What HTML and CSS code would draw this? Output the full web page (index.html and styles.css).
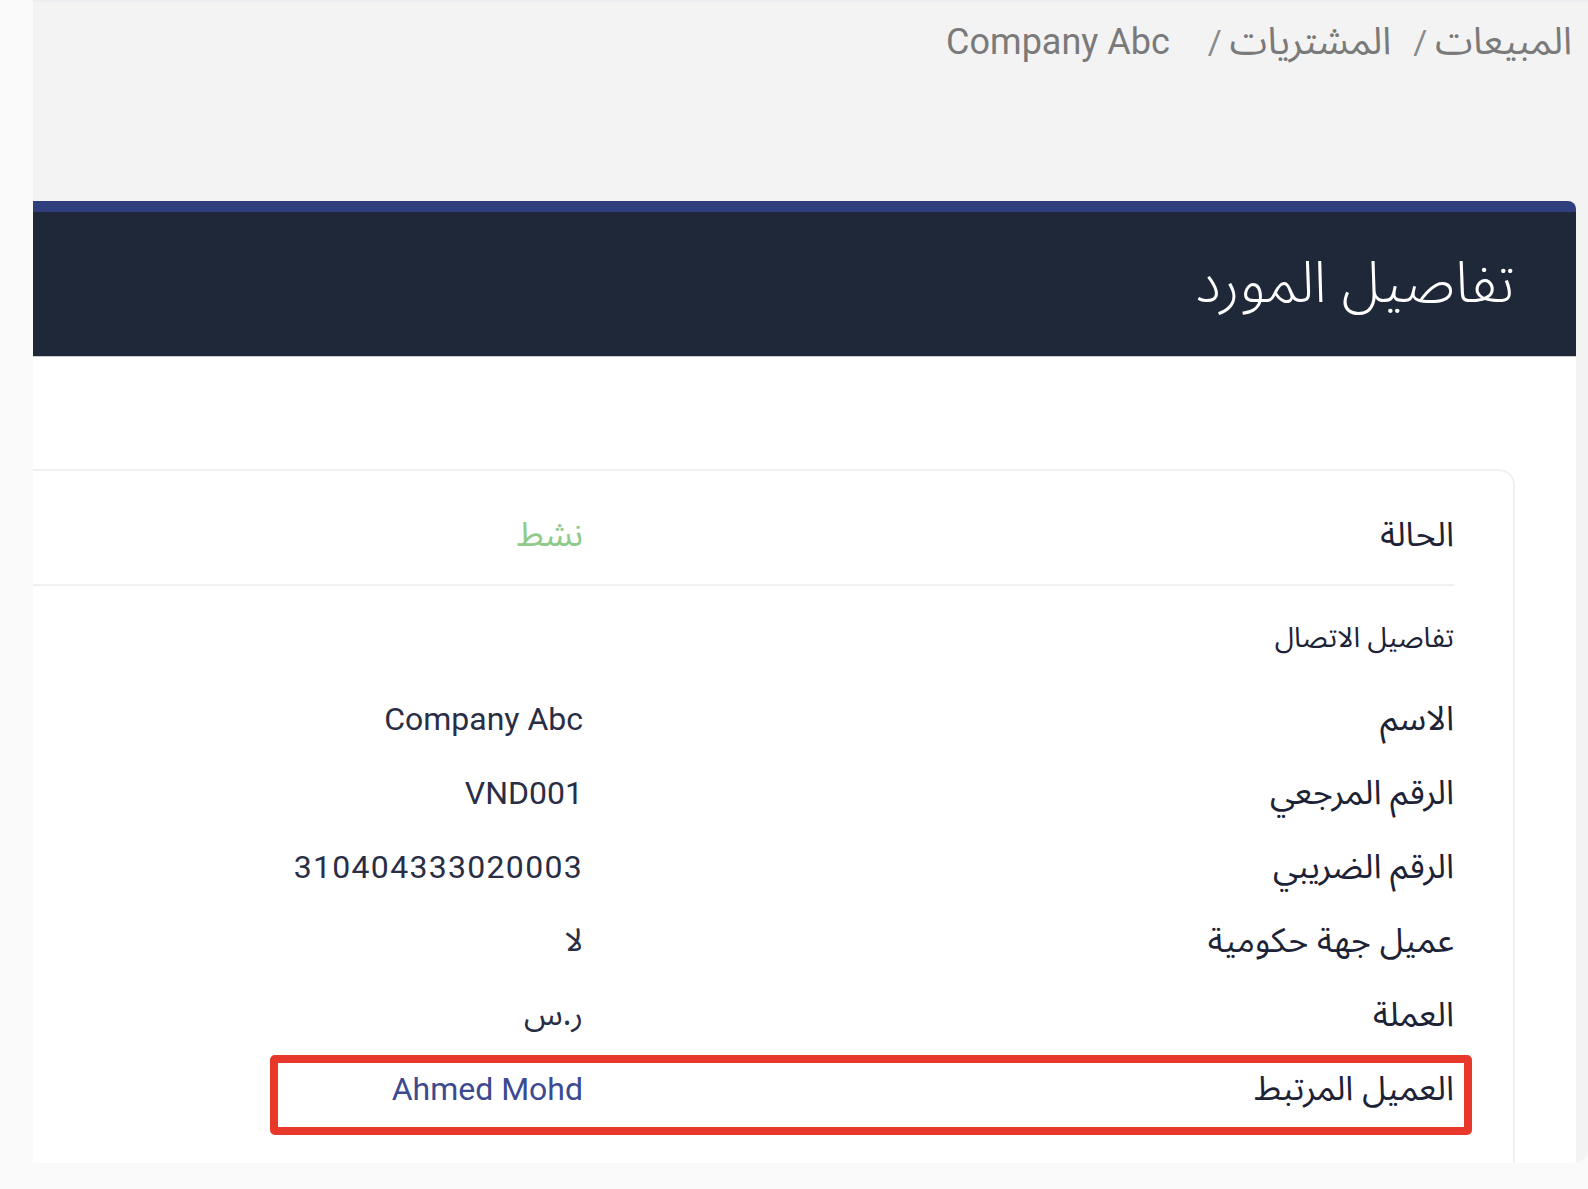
FILE: index.html
```html
<!DOCTYPE html>
<html lang="ar" dir="rtl">
<head>
<meta charset="utf-8">
<title>تفاصيل المورد</title>
<link rel="stylesheet" href="styles.css">
</head>
<body>
<div class="shot">
  <nav class="crumbs">
    <span class="crumb">المبيعات</span><span class="sep">/</span>
    <span class="crumb">المشتريات</span><span class="sep">/</span>
    <span class="crumb latin">Company Abc</span>
  </nav>
  <section class="card">
    <header class="card-head">
      <h1 class="title">تفاصيل المورد</h1>
    </header>
    <div class="card-body">
      <div class="panel">
        <div class="row status-row">
          <div class="label">الحالة</div>
          <div class="value status">نشط</div>
        </div>
        <div class="section-title">تفاصيل الاتصال</div>
        <div class="row">
          <div class="label">الاسم</div>
          <div class="value latin">Company Abc</div>
        </div>
        <div class="row">
          <div class="label">الرقم المرجعي</div>
          <div class="value latin">VND001</div>
        </div>
        <div class="row">
          <div class="label">الرقم الضريبي</div>
          <div class="value latin digits">310404333020003</div>
        </div>
        <div class="row">
          <div class="label">عميل جهة حكومية</div>
          <div class="value">لا</div>
        </div>
        <div class="row">
          <div class="label">العملة</div>
          <div class="value">ر.س</div>
        </div>
        <div class="row linked">
          <div class="label">العميل المرتبط</div>
          <div class="value latin link">Ahmed Mohd</div>
          <span class="highlight"></span>
        </div>
      </div>
    </div>
  </section>
</div>
</body>
</html>
```
FILE: styles.css
```css
* { box-sizing: border-box; }
html, body {
  margin: 0;
  padding: 0;
}
body {
  background: #fafafa;
  font-family: "Noto Sans Arabic", "Noto Kufi Arabic", "DejaVu Sans", Roboto, sans-serif;
  height: 1189px;
  overflow: hidden;
}
.shot {
  margin-left: 33px;
  width: 1555px;
  height: 1163px;
  background: #f3f3f3;
  border-bottom-right-radius: 14px;
  border-top: 2px solid #ecedf0;
  overflow: hidden;
  display: flex;
  flex-direction: column;
}
.crumbs {
  height: 199px;
  display: flex;
  align-items: baseline;
  align-content: flex-start;
  padding: 0 16px 0 0;
  color: #7a7a7a;
  font-size: 38px;
  line-height: normal;
}
.crumb { white-space: nowrap; }
.sep {
  font-family: Roboto, sans-serif;
  font-size: 34px;
  color: #8a8a8a;
  margin: 0 8px 0 22px;
}
.crumb.latin {
  font-family: Roboto, "Open Sans", sans-serif;
  font-size: 36px;
  margin-right: 16px;
}
.card {
  margin-right: 12px;
  margin-left: -60px;
  flex: 1;
  background: #fff;
  border-top: 11px solid #2f3e7c;
  border-radius: 8px 8px 0 0;
  display: flex;
  flex-direction: column;
}
.card-head {
  height: 145px;
  background: #1e2839;
  display: flex;
  align-items: center;
  padding-right: 61px;
  border-bottom: 1px solid #c9cbd2;
}
.title {
  margin: 0;
  color: #fff;
  font-weight: 300;
  font-size: 57px;
  line-height: 1;
}
.card-body {
  padding-top: 112px;
  flex: 1;
}
.panel {
  margin-right: 61px;
  height: 100%;
  border: 2px solid #f0f0f0;
  border-left: none;
  border-bottom: none;
  border-radius: 0 16px 0 0;
  padding-right: 59px;
}
.row {
  display: grid;
  grid-template-columns: 871px 1fr;
  align-items: center;
  height: 74px;
  position: relative;
}
.label {
  color: #1d2336;
  font-size: 34px;
  white-space: nowrap;
}
.value {
  color: #2a2e45;
  font-size: 32px;
  text-align: right;
  white-space: nowrap;
}
.value.latin { font-family: Roboto, "Open Sans", sans-serif; font-size: 32px; }
.value.digits { letter-spacing: 1.3px; }
.status-row {
  height: auto;
  padding: 40px 0 25px;
  line-height: 48px;
  border-bottom: 2px solid #f0f0f0;
}
.status { color: #8ecb8a; font-size: 34px; }
.section-title {
  color: #1d2336;
  font-size: 28px;
  line-height: 44px;
  padding-top: 31px;
  margin-bottom: 21px;
}
.link { color: #3c4a8f; }
.highlight {
  position: absolute;
  top: 3px;
  bottom: -9px;
  right: -18px;
  width: 1202px;
  border: 8px solid #e8372b;
  border-radius: 5px;
  pointer-events: none;
}
```
